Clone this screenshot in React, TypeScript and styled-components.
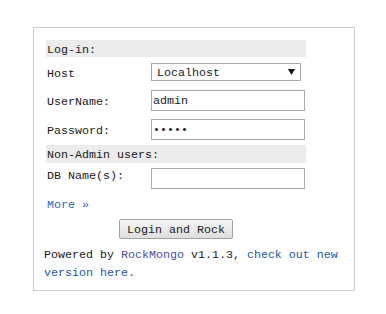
import React from "react";
import styled, { createGlobalStyle } from "styled-components";

const GlobalStyle = createGlobalStyle`
  html, body { margin: 0; padding: 0; background: #ffffff; }
  body {
    padding: 8px;
    font-family: "Liberation Mono", "Courier New", monospace;
    font-size: 11.66px;
    color: #1a1a1a;
  }
`;

const Box = styled.div`
  box-sizing: border-box;
  width: 322px;
  margin: 19px 0 0 25px;
  border: 1px solid #cccccc;
  padding: 10px 10px 8px 10px;
`;

const Form = styled.div`
  width: 262px;
  box-sizing: border-box;
  padding: 2px 0 0 2px;
  display: flex;
  flex-direction: column;
  gap: 2px;
`;

const SectionBar = styled.div<{ $h: number }>`
  height: ${(p) => p.$h}px;
  line-height: ${(p) => p.$h + 3}px;
  overflow: hidden;
  background: #ececec;
  padding-left: 1px;
  white-space: nowrap;
`;

const FieldRow = styled.div<{ $h: number }>`
  display: grid;
  grid-template-columns: 103px 1fr;
  column-gap: 2px;
  height: ${(p) => p.$h}px;
  align-items: center;
`;

const Label = styled.label<{ $top?: boolean }>`
  padding-left: 1px;
  line-height: 14px;
  white-space: nowrap;
  align-self: ${(p) => (p.$top ? "start" : "center")};
  padding-top: ${(p) => (p.$top ? "4px" : "3px")};
`;

const SelectWrap = styled.div`
  position: relative;
  width: 150px;
  height: 18px;
`;

const Select = styled.select`
  appearance: none;
  -webkit-appearance: none;
  box-sizing: border-box;
  width: 150px;
  height: 18px;
  margin: 0;
  border: 1px solid #a6a6a6;
  border-radius: 0;
  background: #ffffff;
  padding: 2px 0 0 5px;
  font: inherit;
  color: #1a1a1a;
  outline: none;
`;

const Arrow = styled.span`
  position: absolute;
  right: 6px;
  top: 6px;
  pointer-events: none;
  display: flex;
`;

const TextInput = styled.input`
  box-sizing: border-box;
  width: 154px;
  height: 21px;
  margin: 0;
  border: 1px solid #a9a9a9;
  padding: 2px 1px 0 1px;
  font: inherit;
  color: #1a1a1a;
  background: #ffffff;
  outline: none;
`;

const MoreLink = styled.a`
  display: block;
  margin-top: 6px;
  padding-left: 3px;
  line-height: 14px;
  color: #2e66b8;
  text-decoration: none;
`;

const ButtonRow = styled.div`
  margin-top: 7px;
  padding-left: 75px;
  display: flex;
`;

const Button = styled.button`
  box-sizing: border-box;
  width: 114px;
  height: 20px;
  margin: 0;
  padding: 2px 0 0 0;
  border: 1px solid #a3a3a3;
  border-radius: 2px;
  background: linear-gradient(#f6f6f6, #dedede);
  font: inherit;
  color: #1a1a1a;
`;

const Footer = styled.p`
  margin: 7px 0 0 0;
  line-height: 18px;
`;

const Link = styled.a<{ $c: string }>`
  color: ${(p) => p.$c};
  text-decoration: none;
`;

export default function App() {
  return (
    <>
      <GlobalStyle />
      <Box>
        <Form>
          <SectionBar $h={17}>Log-in:</SectionBar>
          <FieldRow $h={26}>
            <Label>Host</Label>
            <SelectWrap>
              <Select defaultValue="localhost">
                <option value="localhost">Localhost</option>
              </Select>
              <Arrow>
                <svg width="7" height="6" viewBox="0 0 7 6">
                  <path d="M0 0 H7 L3.5 6 Z" fill="#111" />
                </svg>
              </Arrow>
            </SelectWrap>
          </FieldRow>
          <FieldRow $h={26}>
            <Label>UserName:</Label>
            <TextInput type="text" defaultValue="admin" />
          </FieldRow>
          <FieldRow $h={28}>
            <Label>Password:</Label>
            <TextInput type="password" defaultValue="admin" />
          </FieldRow>
          <SectionBar $h={18}>Non-Admin users:</SectionBar>
          <FieldRow $h={27}>
            <Label $top>DB Name(s):</Label>
            <TextInput type="text" defaultValue="" />
          </FieldRow>
        </Form>
        <MoreLink href="#">More »</MoreLink>
        <ButtonRow>
          <Button type="button">Login and Rock</Button>
        </ButtonRow>
        <Footer>
          Powered by <Link $c="#4a4ea6" href="#">RockMongo</Link> v1.1.3,{" "}
          <Link $c="#2159aa" href="#">check out new</Link>{" "}
          <Link $c="#2159aa" href="#">version here.</Link>
        </Footer>
      </Box>
    </>
  );
}
